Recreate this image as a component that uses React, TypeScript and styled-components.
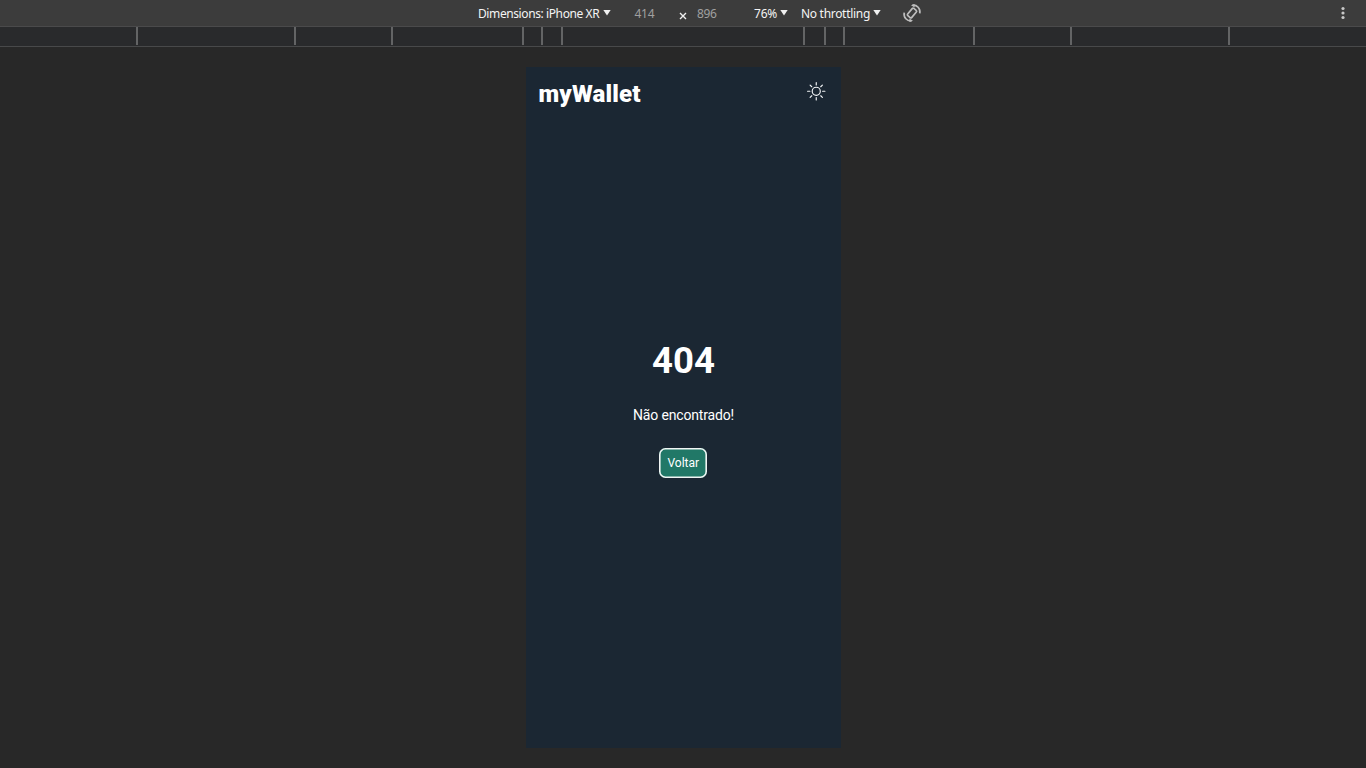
import React from 'react';
import styled, { createGlobalStyle } from 'styled-components';
import { BsSun } from 'react-icons/bs';

const GlobalStyle = createGlobalStyle`
  * { box-sizing: border-box; }
  body { margin: 0; background: #282828; overflow: hidden; }
`;

const Screen = styled.div`
  display: flex;
  flex-direction: column;
  width: 1366px;
  height: 768px;
  background: #282828;
`;

const Toolbar = styled.header`
  display: flex;
  align-items: center;
  height: 27px;
  padding: 0 16px 0 478px;
  background: #3c3c3c;
  border-bottom: 1px solid #4a4a4b;
  font: 12px/16px 'Noto Sans', sans-serif;
  color: #f4f4f4;
  white-space: nowrap;
`;

const ToolText = styled.span<{ $width: number; $spacing?: number; $muted?: boolean }>`
  flex: none;
  width: ${(p) => p.$width}px;
  margin-top: 1px;
  letter-spacing: ${(p) => p.$spacing ?? 0}px;
  color: ${(p) => (p.$muted ? '#a0a0a0' : '#f4f4f4')};
`;

const Caret = styled.i<{ $gap: number }>`
  flex: none;
  width: 8px;
  height: 6px;
  margin: 0 ${(p) => p.$gap}px 1px 0;
  background: #f0f0f0;
  clip-path: polygon(0 0, 100% 0, 50% 100%);
`;

const Times = styled.svg`
  flex: none;
  width: 8px;
  height: 8px;
  margin: 5px 10px 0 0;
`;

const RotateIcon = styled.svg`
  flex: none;
  width: 20px;
  height: 20px;
  margin-left: 4px;
`;

const MoreIcon = styled.svg`
  width: 14px;
  height: 14px;
  margin-left: auto;
`;

const Ruler = styled.div`
  display: flex;
  flex: none;
  height: 20px;
  padding-bottom: 1px;
  background: #292a2c;
  border-bottom: 1px solid #48494a;
`;

const Segment = styled.div<{ $width: number }>`
  width: ${(p) => p.$width}px;
  border-right: 2px solid #636465;
`;

const Stage = styled.main`
  display: flex;
  flex: 1;
  padding: 20px 0 20px 526px;
`;

const Phone = styled.section`
  display: flex;
  flex-direction: column;
  width: 315px;
  height: 681px;
  background: #1b2733;
  color: #fff;
  font-family: Roboto, sans-serif;
`;

const AppBar = styled.div`
  display: flex;
  justify-content: space-between;
  height: 52px;
  padding: 12px 15.5px 0 12.5px;
`;

const Brand = styled.h1`
  margin: 1px 0 0;
  font-size: 24px;
  line-height: 28px;
  font-weight: 900;
  letter-spacing: 0.15px;
`;

const SunIcon = styled(BsSun)`
  width: 18.5px;
  height: 18.5px;
  margin-top: 3px;
  color: #f4f6f8;
`;

const NotFound = styled.div`
  display: flex;
  flex-direction: column;
  align-items: center;
  padding-top: 221px;
`;

const Code = styled.h2`
  margin: 0;
  font-size: 36.5px;
  line-height: 42px;
  font-weight: 700;
`;

const Message = styled.p`
  margin: 25px 0;
  font-size: 14px;
  line-height: 16px;
  letter-spacing: -0.16px;
`;

const BackButton = styled.button`
  width: 48px;
  height: 30px;
  margin-right: 0.5px;
  padding: 0;
  border: 0;
  border-radius: 6.5px;
  background: #217867;
  box-shadow: inset 0 0 0 1.6px #f0f5f4;
  color: #fff;
  font: 12px/14px Roboto, sans-serif;
`;

const segments = [138, 158, 97, 131, 19, 20, 242, 21, 19, 130, 97, 158];

export default function App() {
  return (
    <Screen>
      <GlobalStyle />
      <Toolbar>
        <ToolText $width={125} $spacing={-0.4}>Dimensions: iPhone XR</ToolText>
        <Caret $gap={23.5} />
        <ToolText $width={44.5} $spacing={-0.3} $muted>414</ToolText>
        <Times viewBox="0 0 8 8" stroke="#f0f0f0" strokeWidth="1.4">
          <path d="M1 1l6 6M7 1L1 7" />
        </Times>
        <ToolText $width={57} $spacing={-0.4} $muted>896</ToolText>
        <ToolText $width={26} $spacing={-0.2}>76%</ToolText>
        <Caret $gap={13} />
        <ToolText $width={72} $spacing={-0.3}>No throttling</ToolText>
        <Caret $gap={17} />
        <RotateIcon viewBox="0 0 20 20" fill="none" stroke="#bdbdbd" strokeWidth="1.7">
          <rect x="7.3" y="5.3" width="5.4" height="9.4" rx="1.2" transform="rotate(40 10 10)" />
          <path d="M10.5 2.2C15 1.8 18.6 5.4 17.8 10.4M9.5 17.8C5 18.2 1.4 14.6 2.2 9.6" />
          <path d="M9 2.2L12.6 1V4.6ZM11 17.8L7.4 19V15.4Z" fill="#bdbdbd" stroke="none" />
        </RotateIcon>
        <MoreIcon viewBox="0 0 14 14" fill="#c8c8c8">
          <circle cx="7" cy="2.5" r="1.6" />
          <circle cx="7" cy="7" r="1.6" />
          <circle cx="7" cy="11.5" r="1.6" />
        </MoreIcon>
      </Toolbar>
      <Ruler>
        {segments.map((width, i) => (
          <Segment key={i} $width={width} />
        ))}
      </Ruler>
      <Stage>
        <Phone>
          <AppBar>
            <Brand>myWallet</Brand>
            <SunIcon />
          </AppBar>
          <NotFound>
            <Code>404</Code>
            <Message>Não encontrado!</Message>
            <BackButton>Voltar</BackButton>
          </NotFound>
        </Phone>
      </Stage>
    </Screen>
  );
}
